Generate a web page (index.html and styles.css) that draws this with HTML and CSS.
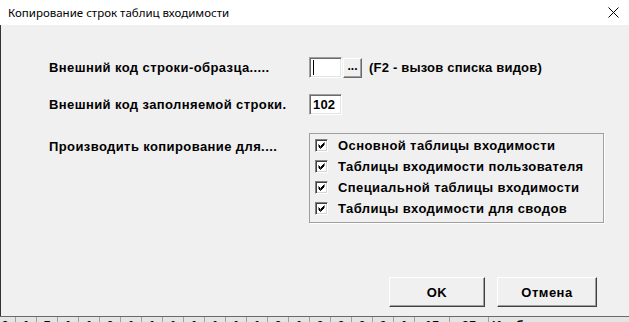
FILE: index.html
```html
<!DOCTYPE html>
<html lang="ru">
<head>
    <meta charset="UTF-8">
    <meta name="viewport" content="width=device-width, initial-scale=1.0">
    <title>Копирование строк таблиц входимости</title>
    <link rel="stylesheet" href="styles.css">
</head>
<body>

    <div class="window">
        <!-- Заголовок окна -->
        <div class="titlebar">
            <span class="title">Копирование строк таблиц входимости</span>
            <svg class="close" width="11" height="11" viewBox="0 0 11 11">
                <path d="M0.5 0.5 L10.5 10.5 M10.5 0.5 L0.5 10.5" stroke="#000" stroke-width="1" fill="none"/>
            </svg>
        </div>

        <div class="dialog">
            <div class="field-row">
                <div class="field-label">Внешний код строки-образца.....</div>
                <div class="field-control">
                    <div class="edit"><span class="caret"></span></div>
                    <button class="browse" type="button">...</button>
                    <span class="hint">(F2 - вызов списка видов)</span>
                </div>
            </div>

            <div class="field-row">
                <div class="field-label">Внешний код заполняемой строки.</div>
                <div class="field-control">
                    <div class="edit">102</div>
                </div>
            </div>

            <div class="field-row field-row-top">
                <div class="field-label group-label">Производить копирование для....</div>
                <div class="group">
                    <div class="check-row"><span class="check"></span>Основной таблицы входимости</div>
                    <div class="check-row"><span class="check"></span>Таблицы входимости пользователя</div>
                    <div class="check-row"><span class="check"></span>Специальной таблицы входимости</div>
                    <div class="check-row"><span class="check"></span>Таблицы входимости для сводов</div>
                </div>
            </div>

            <div class="actions">
                <button class="btn btn-ok" type="button">OK</button>
                <button class="btn btn-cancel" type="button">Отмена</button>
            </div>
        </div>

        <!-- Строка таблицы под диалогом -->
        <div class="grid-row" id="gridRow"></div>
    </div>

    <script>
        // Значения ячеек строки таблицы
        const values = ['0','1','5','1','1','0','1','1','1','1','1','1','1','0','1','0','0','0','0','1'];
        const row = document.getElementById('gridRow');
        values.forEach(v => {
            const cell = document.createElement('div');
            cell.className = 'cell';
            cell.textContent = v;
            row.appendChild(cell);
        });
        ['15', '25'].forEach(v => {
            const cell = document.createElement('div');
            cell.className = 'cell cell-wide';
            cell.textContent = v;
            row.appendChild(cell);
        });
        const last = document.createElement('div');
        last.className = 'cell cell-text';
        last.textContent = 'Изобразить за квартал';
        row.appendChild(last);
    </script>

</body>
</html>
```

FILE: styles.css
```css
* {
    box-sizing: border-box;
}
body {
    margin: 0;
    padding: 0;
    background-color: #f0f0f0;
    overflow: hidden;
}
.window {
    width: 629px;
    height: 322px;
    display: flex;
    flex-direction: column;
    overflow: hidden;
}
.titlebar {
    height: 25px;
    flex: none;
    background-color: #fff;
    display: flex;
    align-items: center;
    justify-content: space-between;
    padding: 0 10px 0 8px;
}
.title {
    font-family: "Noto Sans", sans-serif;
    font-size: 11.5px;
    color: #000;
    margin-top: -1px;
}
.close {
    display: block;
}
.dialog {
    height: 291px;
    flex: none;
    border-left: 1px solid #333;
    padding: 32px 0 0 48px;
    display: flex;
    flex-direction: column;
    font-family: "Liberation Sans", Arial, sans-serif;
    font-weight: bold;
    font-size: 13px;
    letter-spacing: 0.4px;
    color: #000;
}
.field-row {
    display: flex;
    align-items: center;
    margin-bottom: 16px;
}
.field-row-top {
    align-items: flex-start;
    margin-top: 2px;
}
.field-label {
    width: 260px;
    flex: none;
}
.group-label {
    padding-top: 6px;
}
.field-control {
    display: flex;
    align-items: center;
}
.edit {
    width: 33px;
    height: 21px;
    background-color: #fff;
    border: 1px solid;
    border-color: #a0a0a0 #fff #fff #a0a0a0;
    box-shadow: inset 1px 1px 0 #696969, inset -1px -1px 0 #e3e3e3;
    padding: 1px 0 0 3px;
    line-height: 18px;
    letter-spacing: 0.2px;
}
.caret {
    display: block;
    width: 1px;
    height: 15px;
    margin-top: 1px;
    background-color: #000;
}
.browse {
    width: 19px;
    height: 20px;
    margin-left: 1px;
    padding: 0 0 4px 0;
    background-color: #f0f0f0;
    border: 1px solid;
    border-color: #fff #696969 #696969 #fff;
    box-shadow: inset -1px -1px 0 #a0a0a0;
    font-family: "Liberation Sans", Arial, sans-serif;
    font-weight: bold;
    font-size: 12px;
    line-height: 12px;
    letter-spacing: 0;
}
.hint {
    margin-left: 7px;
    letter-spacing: 0.2px;
}
.group {
    width: 295px;
    border: 1px solid #a0a0a0;
    box-shadow: 1px 1px 0 #fff;
    padding: 1px 0 3px 0;
}
.check-row {
    height: 21px;
    display: flex;
    align-items: center;
    padding-left: 5px;
}
.check {
    width: 13px;
    height: 13px;
    flex: none;
    margin-right: 10px;
    background-color: #fff;
    border: 1px solid;
    border-color: #808080 #fff #fff #808080;
    box-shadow: inset 1px 1px 0 #404040, inset -1px -1px 0 #d4d4d4;
    background-image: url("data:image/svg+xml,%3Csvg xmlns='http://www.w3.org/2000/svg' width='11' height='11'%3E%3Cpath d='M2.5 4.5 L4.5 6.5 L8.5 2.5 M2.5 5.5 L4.5 7.5 L8.5 3.5 M2.5 6.5 L4.5 8.5 L8.5 4.5' stroke='%23000' stroke-width='1' fill='none'/%3E%3C/svg%3E");
    background-repeat: no-repeat;
}
.actions {
    display: flex;
    justify-content: flex-end;
    gap: 12px;
    margin-top: auto;
    margin-bottom: 9px;
    padding-right: 32px;
}
.btn {
    height: 30px;
    background-color: #f0f0f0;
    border: 1px solid;
    border-color: #fff #404040 #404040 #fff;
    box-shadow: inset -1px -1px 0 #a0a0a0;
    font-family: "Liberation Sans", Arial, sans-serif;
    font-weight: bold;
    font-size: 13px;
    letter-spacing: 0.5px;
    color: #000;
    padding: 0;
}
.btn-ok {
    width: 96px;
}
.btn-cancel {
    width: 100px;
}
.grid-row {
    height: 20px;
    flex: none;
    display: flex;
    border-top: 1px solid #696969;
    background-color: #e4e4e4;
    margin-left: -5px;
    font-family: "Liberation Sans", Arial, sans-serif;
    font-weight: bold;
    font-size: 13px;
}
.cell {
    width: 21px;
    flex: none;
    border-right: 1px solid #a0a0a0;
    text-align: center;
    padding-top: 1px;
}
.cell-wide {
    width: 35px;
}
.cell-wide + .cell-wide {
    width: 39px;
}
.cell-text {
    width: auto;
    padding-left: 3px;
    text-align: left;
    white-space: nowrap;
}
```
